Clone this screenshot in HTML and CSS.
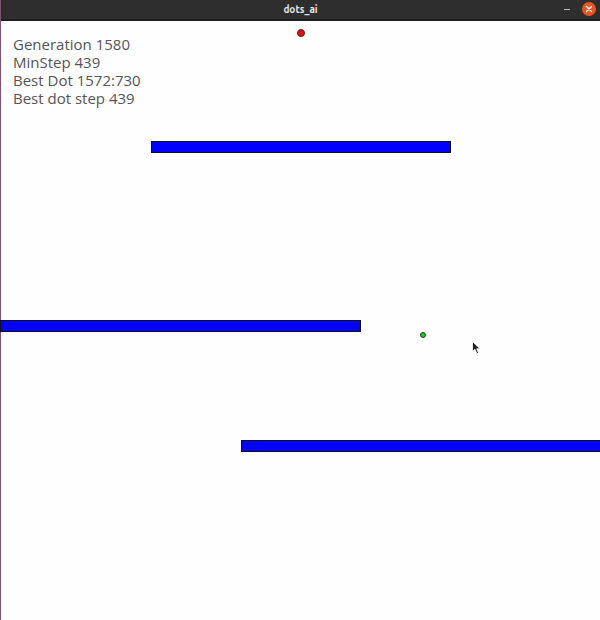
FILE: index.html
```html
<!DOCTYPE html>
<html>
<head>
<meta charset="utf-8">
<link rel="stylesheet" href="styles.css">
</head>
<body>
<div class="window">
  <div class="titlebar">
    <span class="title">dots_ai</span>
    <div class="controls">
      <span class="minimize"></span>
      <span class="close">
        <svg width="14" height="14" viewBox="0 0 14 14"><circle cx="7" cy="7" r="7" fill="#e95420"/><path d="M4.5 4.5 L9.5 9.5 M9.5 4.5 L4.5 9.5" stroke="#fff" stroke-width="1.4" stroke-linecap="round"/></svg>
      </span>
    </div>
  </div>
  <div class="canvas">
    <div class="stats">
      <div>Generation 1580</div>
      <div>MinStep 439</div>
      <div>Best Dot 1572:730</div>
      <div>Best dot step 439</div>
    </div>
    <span class="dot goal" style="left:296px;top:8px"></span>
    <span class="bar" style="left:150px;top:120px;width:300px"></span>
    <span class="bar" style="left:-1px;top:299px;width:361px"></span>
    <span class="bar" style="left:240px;top:419px;width:361px"></span>
    <span class="dot best" style="left:419px;top:311px"></span>
    <svg class="cursor" style="left:471px;top:320px" width="10" height="14" viewBox="0 0 10 14"><path d="M0.5 0.5 L0.5 10.5 L3 8.3 L5 12.8 L6.6 12.1 L4.7 7.8 L8 7.8 Z" fill="#222" stroke="#fff" stroke-width="0.8"/></svg>
  </div>
</div>
</body>
</html>
```
FILE: styles.css
```css
html, body {
  margin: 0;
  padding: 0;
  background: #fff;
}
.window {
  width: 600px;
  height: 620px;
  display: flex;
  flex-direction: column;
  border-left: 1px solid #7d5370;
  box-sizing: border-box;
}
.titlebar {
  height: 19px;
  background: #2e2e2e;
  border-bottom: 2px solid #1f1f1f;
  display: flex;
  align-items: center;
  justify-content: center;
  position: relative;
  flex: none;
}
.title {
  color: #e6e6e6;
  font-family: "Ubuntu", "DejaVu Sans", sans-serif;
  font-size: 10px;
  font-weight: bold;
}
.controls {
  position: absolute;
  right: 4px;
  top: 2px;
  display: flex;
  align-items: center;
  gap: 12px;
}
.minimize {
  width: 6px;
  height: 1px;
  background: #bbb;
}
.close {
  display: flex;
  width: 14px;
  height: 14px;
}
.canvas {
  position: relative;
  flex: 1;
  background: #fefefe;
}
.stats {
  padding: 14px 0 0 12px;
  font-family: "Open Sans", sans-serif;
  font-size: 15px;
  line-height: 18px;
  color: #555;
}
.bar {
  position: absolute;
  height: 12px;
  background: #0000ff;
  border: 1px solid #111;
  box-sizing: border-box;
}
.dot {
  position: absolute;
  border-radius: 50%;
  border: 1px solid #333;
  box-sizing: border-box;
}
.goal {
  width: 8px;
  height: 8px;
  background: #ff0000;
}
.best {
  width: 6px;
  height: 6px;
  background: #00e000;
}
.cursor {
  position: absolute;
}
```
